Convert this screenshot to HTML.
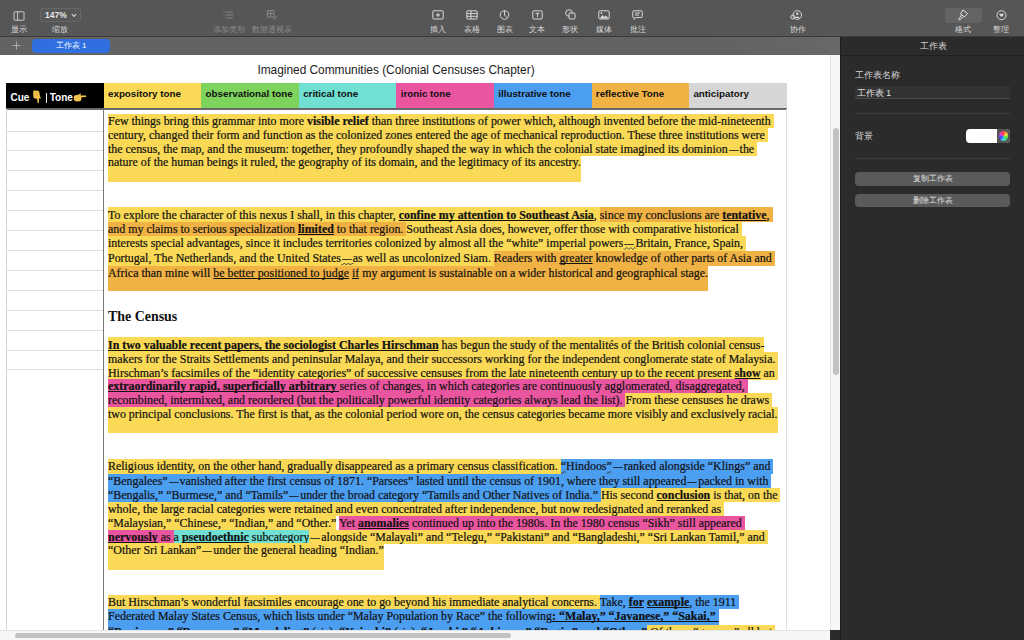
<!DOCTYPE html>
<html><head><meta charset="utf-8">
<style>
*{box-sizing:border-box}
html,body{margin:0;padding:0}
body{width:1024px;height:640px;overflow:hidden;position:relative;background:#fff;font-family:"Liberation Sans",sans-serif}
.abs{position:absolute}
#tb{position:absolute;left:0;top:0;width:1024px;height:37px;background:#565656;border-bottom:1px solid #3a3a3a}
.tl{position:absolute;top:25.3px;font-size:8px;line-height:10px;color:#d8d8d8;white-space:nowrap;text-align:center}
.tl.dis{color:#8a8a8a}
.ic{position:absolute;top:9px}
#tabs{position:absolute;left:0;top:37px;width:840px;height:18px;background:linear-gradient(90deg,#636363 0%,#626262 85%,#686868 100%)}
#tab1{position:absolute;left:32px;top:2.3px;width:78px;height:13.5px;border-radius:4px;background:#2f6fe0;color:#fff;font-size:8px;line-height:13.5px;text-align:center}
#plus{position:absolute;left:10px;top:1px;color:#c8c8c8;font-size:13px;line-height:16px;font-weight:300}
#canvas{position:absolute;left:0;top:55px;width:830px;height:575px;background:#fff;overflow:hidden}
#title{position:absolute;left:0;top:63px;width:792px;text-align:center;font:11.88px/14px "Liberation Sans",sans-serif;color:#1a1a1a;white-space:pre}
.hc{position:absolute;top:83.3px;height:25px;color:#111;font:bold 9.8px/21px "Liberation Sans",sans-serif;padding-left:4.3px;white-space:pre}
#cue{position:absolute;left:6px;top:83.3px;width:97.7px;height:25px;background:#000;color:#fff;font:bold 9.8px/21px "Liberation Sans",sans-serif;padding-left:4px;white-space:pre}
#hline{position:absolute;left:6px;top:108.3px;width:780.5px;height:1.5px;background:#6a6a6a}
.gl{position:absolute;left:6.5px;width:97px;height:1px;background:#e0e0e0}
#lb{position:absolute;left:6px;top:109px;width:1px;height:521px;background:#d4d4d4}
#vl{position:absolute;left:103px;top:109px;width:1px;height:521px;background:#7a7a7a}
#rb{position:absolute;left:786px;top:109px;width:1px;height:521px;background:#dedede}
.ln{position:absolute;left:108px;font-size:11.93px;line-height:14px;height:14px;white-space:pre;color:#111;font-family:"Liberation Serif",serif;-webkit-text-stroke:0.2px #111}
.ln span{padding:0}
.y{background:#f9d956}.o{background:#f0b244}.b{background:#4c9ef0}.p{background:#e9559f}.c{background:#6fe0d2}
.B{font-weight:bold}
.U{text-decoration:underline;text-decoration-thickness:1px;text-underline-offset:1px;text-decoration-skip-ink:none}
.er{position:absolute;left:108px}
.ed{display:inline-block;transform:scaleX(.78)}

#h1{position:absolute;left:108px;top:309px;font:bold 13.93px/16px "Liberation Serif",serif;color:#111;white-space:pre}
#vsb{position:absolute;left:830px;top:55px;width:10px;height:575px;background:#f6f6f6;border-left:1px solid #e6e6e6}
#vth{position:absolute;left:833px;top:127.5px;width:5.5px;height:247px;border-radius:3px;background:#c2c2c2}
#hsb{position:absolute;left:0;top:630px;width:830px;height:10px;background:#f6f6f6;border-top:1px solid #e3e3e3}
#hth{position:absolute;left:14.6px;top:632.5px;width:496px;height:5.5px;border-radius:3px;background:#c2c2c2}
#corner{position:absolute;left:830px;top:630px;width:10px;height:10px;background:#2a2a2a}
#panel{position:absolute;left:840px;top:37px;width:184px;height:604px;background:#2b2b2b;border-left:1px solid #1e1e1e}
#panel .t{position:absolute;color:#d6d6d6;font-size:8.5px;line-height:10px;white-space:nowrap}
.sep{position:absolute;left:14px;width:155px;height:1px;background:#3c3c3c}
.btn{position:absolute;left:14px;width:155px;height:13.5px;border-radius:4px;background:#5a5a5a;color:#e0e0e0;font-size:8px;line-height:13.5px;text-align:center}
</style></head><body>
<div id="tb">
  <!-- 显示 -->
  <svg class="ic" style="left:13px;top:10.5px" width="12" height="10" viewBox="0 0 12 10"><rect x="1" y="0.8" width="10" height="8.4" rx="0.8" fill="none" stroke="#d8d8d8" stroke-width="0.9"/><line x1="4.6" y1="0.8" x2="4.6" y2="9.2" stroke="#d8d8d8" stroke-width="0.9"/></svg>
  <div class="tl" style="left:9px;width:20px">显示</div>
  <div class="abs" style="left:40px;top:8.3px;width:41px;height:14px;border-radius:3px;border:1px solid #666;background:#585858"></div>
  <div class="abs" style="left:45px;top:10px;font-size:8.5px;line-height:10px;color:#e6e6e6;font-weight:bold">147%</div>
  <svg class="abs" style="left:71px;top:13px" width="6" height="5" viewBox="0 0 6 5"><path d="M0.8 1 L3 3.4 L5.2 1" fill="none" stroke="#e0e0e0" stroke-width="1.1"/></svg>
  <div class="tl" style="left:50px;width:20px">缩放</div>
  <!-- 添加类别 -->
  <svg class="ic" style="left:223px;top:11px" width="11" height="8" viewBox="0 0 11 8"><g stroke="#8a8a8a" stroke-width="0.9"><line x1="0.5" y1="1" x2="1.5" y2="1"/><line x1="3" y1="1" x2="10" y2="1"/><line x1="0.5" y1="4" x2="1.5" y2="4"/><line x1="3" y1="4" x2="10" y2="4"/><line x1="0.5" y1="7" x2="1.5" y2="7"/><line x1="3" y1="7" x2="10" y2="7"/></g></svg>
  <div class="tl dis" style="left:212px;width:33px">添加类别</div>
  <svg class="ic" style="left:267px;top:10px" width="11" height="10" viewBox="0 0 11 10"><g stroke="#8a8a8a" stroke-width="0.9" fill="none"><rect x="0.5" y="0.5" width="6.5" height="6.5"/><line x1="3.7" y1="0.5" x2="3.7" y2="7"/><line x1="0.5" y1="3.7" x2="7" y2="3.7"/><path d="M9.5 6 Q9.5 9 6 9"/></g></svg>
  <div class="tl dis" style="left:252px;width:40px">数据透视表</div>
  <!-- 插入 -->
  <svg class="ic" style="left:432px;top:10px" width="12" height="10" viewBox="0 0 12 10"><g stroke="#d8d8d8" stroke-width="1" fill="none"><rect x="0.8" y="0.8" width="10.4" height="8.2" rx="0.8"/><line x1="6" y1="3" x2="6" y2="7"/><line x1="4" y1="5" x2="8" y2="5"/></g></svg>
  <div class="tl" style="left:430px;width:16px">插入</div>
  <svg class="ic" style="left:466px;top:10px" width="12" height="10" viewBox="0 0 12 10"><g stroke="#d8d8d8" stroke-width="1" fill="none"><rect x="0.8" y="0.8" width="10.4" height="8.2" rx="1"/><line x1="0.8" y1="3.6" x2="11.2" y2="3.6"/><line x1="0.8" y1="6.3" x2="11.2" y2="6.3"/><line x1="5" y1="0.8" x2="5" y2="9"/></g></svg>
  <div class="tl" style="left:464px;width:16px">表格</div>
  <svg class="ic" style="left:499px;top:10px" width="11" height="10" viewBox="0 0 11 10"><g stroke="#d8d8d8" stroke-width="1" fill="none"><circle cx="5.5" cy="5" r="4.3"/><path d="M5.5 0.7 L5.5 5 L8 7.5"/></g></svg>
  <div class="tl" style="left:497px;width:16px">图表</div>
  <svg class="ic" style="left:532px;top:10px" width="11" height="10" viewBox="0 0 11 10"><g stroke="#d8d8d8" stroke-width="1" fill="none"><rect x="0.8" y="0.8" width="9.4" height="8.2" rx="1"/><line x1="3.5" y1="3.3" x2="7.5" y2="3.3"/><line x1="5.5" y1="3.3" x2="5.5" y2="7"/></g></svg>
  <div class="tl" style="left:529px;width:16px">文本</div>
  <svg class="ic" style="left:565px;top:9px" width="11" height="11" viewBox="0 0 11 11"><g stroke="#d8d8d8" stroke-width="1" fill="none"><circle cx="4" cy="4" r="3.3"/><rect x="4" y="4" width="6" height="6" rx="0.8" fill="#5a5a5a"/></g></svg>
  <div class="tl" style="left:562px;width:16px">形状</div>
  <svg class="ic" style="left:598px;top:10px" width="12" height="10" viewBox="0 0 12 10"><g stroke="#d8d8d8" stroke-width="1" fill="none"><rect x="0.8" y="0.8" width="10.4" height="8.2" rx="1"/></g><path d="M1.5 8.5 L4.5 5 L6.5 7 L8 5.5 L10.5 8.5Z" fill="#d8d8d8"/><circle cx="3.5" cy="3.2" r="0.9" fill="#d8d8d8"/></svg>
  <div class="tl" style="left:596px;width:16px">媒体</div>
  <svg class="ic" style="left:632px;top:10px" width="11" height="11" viewBox="0 0 11 11"><g stroke="#d8d8d8" stroke-width="1" fill="none"><path d="M1.5 0.8 H9.5 Q10.2 0.8 10.2 1.5 V6.8 Q10.2 7.5 9.5 7.5 H4 L2.2 9.5 V7.5 H1.5 Q0.8 7.5 0.8 6.8 V1.5 Q0.8 0.8 1.5 0.8Z"/><line x1="3" y1="3" x2="8" y2="3"/><line x1="3" y1="5" x2="7" y2="5"/></g></svg>
  <div class="tl" style="left:630px;width:16px">批注</div>
  <!-- 协作 -->
  <svg class="ic" style="left:790px;top:10px" width="13" height="11" viewBox="0 0 13 11"><g stroke="#d8d8d8" stroke-width="1" fill="none"><circle cx="7.3" cy="5" r="4.3"/><circle cx="2.8" cy="7" r="2"/></g><circle cx="7.3" cy="3.8" r="1.2" fill="#d8d8d8"/><path d="M5.2 7.5 Q7.3 5.5 9.4 7.5 V8 H5.2Z" fill="#d8d8d8"/></svg>
  <div class="tl" style="left:789px;width:17px">协作</div>
  <!-- 格式 -->
  <div class="abs" style="left:945px;top:8.1px;width:37px;height:14.8px;border-radius:3px;background:#646464"></div>
  <svg class="ic" style="left:957px;top:9px" width="12" height="12" viewBox="0 0 12 12"><g stroke="#e0e0e0" stroke-width="1" fill="none"><path d="M6 1 L10.5 4.5 L7.5 8 L3.5 5Z"/><path d="M4.5 6 L1.5 10.5 L2.5 11 L6.5 7.5"/></g></svg>
  <div class="tl" style="left:954px;width:17px">格式</div>
  <svg class="ic" style="left:996px;top:10px" width="11" height="11" viewBox="0 0 11 11"><g stroke="#d8d8d8" stroke-width="1" fill="none"><circle cx="5.5" cy="5.2" r="4.5"/></g><path d="M3 3.8 H8 L6.5 6.5 H4.5Z" fill="#d8d8d8"/></svg>
  <div class="tl" style="left:992px;width:17px">整理</div>
</div>
<div id="tabs"><svg class="abs" style="left:12px;top:4px" width="9" height="9" viewBox="0 0 9 9"><path d="M4.5 0.5 V8.5 M0.5 4.5 H8.5" stroke="#bdbdbd" stroke-width="0.8"/></svg><div id="tab1">工作表 1</div></div>
<div id="canvas"></div>
<div id="title">Imagined Communities (Colonial Censuses Chapter)</div>
<div id="cue"></div>
<div class="abs" style="left:10.5px;top:91px;font:bold 10px/14px 'Liberation Sans',sans-serif;color:#fff;white-space:pre">Cue</div>
<div class="abs" style="left:45.5px;top:93px;width:1.3px;height:10px;background:#eee"></div>
<div class="abs" style="left:49.7px;top:91px;font:bold 10px/14px 'Liberation Sans',sans-serif;color:#fff;white-space:pre">Tone</div>
<svg class="abs" style="left:32px;top:89.5px" width="10" height="14" viewBox="0 0 10 14"><path d="M1.2 1.5 Q1.2 0.5 2.5 0.6 L6 0.8 Q7.2 1 7.3 2.5 L8 6 Q9 8 8.6 8.8 L7 8.3 L7 12.5 Q6.3 13.5 5.5 12.5 L5.2 8.8 Q3 9 1.8 8 Q1 6.5 1.2 1.5Z" fill="#f2c14e"/><path d="M1.5 3 L6.5 3.2 M1.6 5 L6.5 5.2" stroke="#d9a32e" stroke-width="0.5"/></svg>
<svg class="abs" style="left:72.5px;top:92.5px" width="14" height="9" viewBox="0 0 14 9"><path d="M0.8 4 Q0.8 2.5 2.5 2.3 L6 1.5 Q7 0.3 8 0.7 L7.5 2.4 L13 2.4 Q13.6 3.2 13 4 L8.5 4.2 Q8.8 7.5 7 8.2 L3 8.4 Q0.8 8 0.8 6Z" fill="#f2c14e"/></svg>
<div class="hc" style="left:103.70px;width:97.57px;background:#f9d956"><span>expository tone</span></div><div class="hc" style="left:201.27px;width:97.57px;background:#7ed35c"><span>observational tone</span></div><div class="hc" style="left:298.84px;width:97.57px;background:#6fe0d2"><span>critical tone</span></div><div class="hc" style="left:396.41px;width:97.57px;background:#e9559f"><span>ironic tone</span></div><div class="hc" style="left:493.98px;width:97.57px;background:#4c9ef0"><span>illustrative tone</span></div><div class="hc" style="left:591.55px;width:97.57px;background:#f0b244"><span>reflective Tone</span></div><div class="hc" style="left:689.12px;width:97.57px;background:#d6d6d6"><span>anticipatory</span></div>
<div id="hline"></div>
<div id="lb"></div>
<div class="gl" style="top:130.5px"></div><div class="gl" style="top:150.4px"></div><div class="gl" style="top:170.3px"></div><div class="gl" style="top:190.2px"></div><div class="gl" style="top:210.1px"></div><div class="gl" style="top:230.1px"></div><div class="gl" style="top:250.0px"></div><div class="gl" style="top:269.9px"></div><div class="gl" style="top:289.8px"></div><div class="gl" style="top:309.7px"></div><div class="gl" style="top:329.6px"></div><div class="gl" style="top:349.5px"></div><div class="gl" style="top:369.4px"></div>
<div id="vl"></div>
<div id="rb"></div>
<div class="er y" style="top:169px;height:13px;width:473.00px"></div>
<div class="er o" style="top:280px;height:11px;width:600.00px"></div>
<div class="er y" style="top:421px;height:12px;width:669.70px"></div>
<div class="er y" style="top:557px;height:13px;width:276.00px"></div>
<div class="ln" style="top:114px"><span class="y">Few things bring this grammar into more </span><span class="y B">visible relief</span><span class="y"> than three institutions of power which, although invented before the mid-nineteenth </span></div>
<div class="ln" style="top:128px"><span class="y">century, changed their form and function as the colonized zones entered the age of mechanical reproduction. These three institutions were </span></div>
<div class="ln" style="top:142px"><span class="y">the census, the map, and the museum: together, they profoundly shaped the way in which the colonial state imagined its dominion<span class="ed">—</span>the </span></div>
<div class="ln" style="top:155px"><span class="y">nature of the human beings it ruled, the geography of its domain, and the legitimacy of its ancestry.</span></div>
<div class="ln" style="top:208px"><span class="y" style="padding-top:1px;">To explore the character of this nexus I shall, in this chapter, </span><span class="y B U" style="padding-top:1px;">confine my attention to Southeast Asia</span><span class="y" style="padding-top:1px;">, </span><span class="o" style="padding-top:1px;">since my conclusions are </span><span class="o B U" style="padding-top:1px;">tentative</span><span class="o" style="padding-top:1px;">, </span></div>
<div class="ln" style="top:222px"><span class="o">and my claims to serious specialization </span><span class="o B U">limited</span><span class="o"> to that region. </span><span class="y">Southeast Asia does, however, offer those with comparative historical </span></div>
<div class="ln" style="top:236px"><span class="y" style="padding-bottom:1px;">interests special advantages, since it includes territories colonized by almost all the “white” imperial powers</span><span class="y W" style="padding-bottom:1px;"><span class="ed">—</span></span><span class="y" style="padding-bottom:1px;">Britain, France, Spain, </span></div>
<div class="ln" style="top:251px"><span class="y" style="padding-bottom:1px;">Portugal, The Netherlands, and the United States</span><span class="y W" style="padding-bottom:1px;"><span class="ed">—</span></span><span class="y" style="padding-bottom:1px;">as well as uncolonized Siam. </span><span class="o" style="padding-bottom:1px;">Readers with </span><span class="o U" style="padding-bottom:1px;">greater</span><span class="o" style="padding-bottom:1px;"> knowledge of other parts of Asia and </span></div>
<div class="ln" style="top:266px"><span class="o">Africa than mine will </span><span class="o U">be better positioned to judge</span><span class="o"> </span><span class="o U">if</span><span class="o"> my argument is sustainable on a wider historical and geographical stage.</span></div>
<div class="ln" style="top:338px"><span class="y B U" style="padding-top:1px;">In two valuable recent papers, the sociologist Charles Hirschman</span><span class="y" style="padding-top:1px;"> has begun the study of the mentalités of the British colonial census-</span></div>
<div class="ln" style="top:352px"><span class="y">makers for the Straits Settlements and peninsular Malaya, and their successors working for the independent conglomerate state of Malaysia. </span></div>
<div class="ln" style="top:366px"><span class="y">Hirschman’s facsimiles of the “identity categories” of successive censuses from the late nineteenth century up to the recent present </span><span class="y B U">show</span><span class="y"> an </span></div>
<div class="ln" style="top:379px"><span class="p B U">extraordinarily rapid, superficially arbitrary </span><span class="p">series of changes, in which categories are continuously agglomerated, disaggregated, </span></div>
<div class="ln" style="top:393px"><span class="p">recombined, intermixed, and reordered (but the politically powerful identity categories always lead the list). </span><span class="y">From these censuses he draws </span></div>
<div class="ln" style="top:407px"><span class="y">two principal conclusions. The first is that, as the colonial period wore on, the census categories became more visibly and exclusively racial.</span></div>
<div class="ln" style="top:459px"><span class="y" style="padding-bottom:1px;">Religious identity, on the other hand, gradually disappeared as a primary census classification. </span><span class="b W" style="padding-bottom:1px;">“Hindoos”</span><span class="b" style="padding-bottom:1px;"><span class="ed">—</span>ranked alongside “Klings” and </span></div>
<div class="ln" style="top:474px"><span class="b">“Bengalees”<span class="ed">—</span>vanished after the first census of 1871. “Parsees” lasted until the census of 1901, where they still appeared<span class="ed">—</span>packed in with </span></div>
<div class="ln" style="top:488px"><span class="b">“Bengalis,” “Burmese,” and “Tamils”<span class="ed">—</span>under the broad category “Tamils and Other Natives of India.” </span><span class="y">His second </span><span class="y B U">conclusion</span><span class="y"> is that, on the </span></div>
<div class="ln" style="top:502px"><span class="y">whole, the large racial categories were retained and even concentrated after independence, but now redesignated and reranked as </span></div>
<div class="ln" style="top:516px"><span class="y">“Malaysian,” “Chinese,” “Indian,” and “Other.”</span><span class=""> </span><span class="p">Yet </span><span class="p B U">anomalies</span><span class="p"> continued up into the 1980s. In the 1980 census “Sikh” still appeared </span></div>
<div class="ln" style="top:530px"><span class="p B U">nervously</span><span class="p"> as </span><span class="c">a </span><span class="c B U">pseudoethnic</span><span class="c"> subcategory</span><span class="y"><span class="ed">—</span>alongside “Malayali” and “Telegu,” “Pakistani” and “Bangladeshi,” “Sri Lankan Tamil,” and </span></div>
<div class="ln" style="top:543px"><span class="y">“Other Sri Lankan”<span class="ed">—</span>under the general heading “Indian.”</span></div>
<div class="ln" style="top:595px"><span class="y">But Hirschman’s wonderful facsimiles encourage one to go beyond his immediate analytical concerns. </span><span class="b">Take, </span><span class="b B U">for</span><span class="b"> </span><span class="b B U">example</span><span class="b">, the 1911 </span></div>
<div class="ln" style="top:609px"><span class="b" style="padding-bottom:2px;">Federated Malay States Census, which lists under “Malay Population by Race” the following</span><span class="b B U" style="padding-bottom:2px;">: “Malay,” “Javanese,” “Sakai,” </span></div>
<div class="ln" style="top:625px"><span class="b B U">“Banjarese,” “Boyanese,” “Mandeling”</span><span class="b"> (sic), </span><span class="b B U">“Krinchi”</span><span class="b"> (sic), </span><span class="b B U">“Jambi,” “Achinese,” “Bugis,” and “Other.”</span><span class="y"> Of these “groups,” all but </span></div>
<div id="h1">The Census</div>
<svg class="abs" style="left:0;top:0" width="1024" height="640"><g fill="none" stroke="#333" stroke-width="0.9">
<path d="M623.8 248.5 q1 2 2 0 t2 0 t2 0 t2 0 t2 0 t2 0"/>
<path d="M341.4 264 q1 2 2 0 t2 0 t2 0 t2 0 t2 0 t2 0"/>
<path d="M561 472.5 q1.2 2 2.4 0 t2.4 0"/>
<path d="M606.5 472.5 q1.2 2 2.4 0 t2.4 0"/>
</g></svg>
<div id="vsb"></div><div id="vth"></div>
<div id="hsb"></div><div id="hth"></div>
<div id="corner"></div>
<div id="panel">
  <div class="t" style="left:0;width:184px;text-align:center;top:4px">工作表</div>
  <div class="abs" style="left:0;top:17.5px;width:184px;height:1px;background:#1f1f1f"></div>
  <div class="t" style="left:14px;top:33px">工作表名称</div>
  <div class="abs" style="left:14px;top:49px;width:155px;height:12.5px;background:#333;border-bottom:1px solid #4a4a4a"></div>
  <div class="t" style="left:16px;top:50.5px;color:#e0e0e0">工作表 1</div>
  <div class="sep" style="top:75.5px"></div>
  <div class="t" style="left:14px;top:94px">背景</div>
  <div class="abs" style="left:125px;top:91.5px;width:44px;height:14px;border-radius:4px;background:#fff"></div>
  <div class="abs" style="left:155.5px;top:91.5px;width:13.5px;height:14px;border-radius:0 4px 4px 0;background:#555"></div>
  <div class="abs" style="left:157.5px;top:94px;width:9.5px;height:9.5px;border-radius:50%;background:conic-gradient(#f44,#fd4,#4d4,#4dd,#44f,#d4d,#f44)"></div>
  <div class="sep" style="top:121px"></div>
  <div class="btn" style="top:135px">复制工作表</div>
  <div class="btn" style="top:156.5px">删除工作表</div>
</div>
</body></html>
